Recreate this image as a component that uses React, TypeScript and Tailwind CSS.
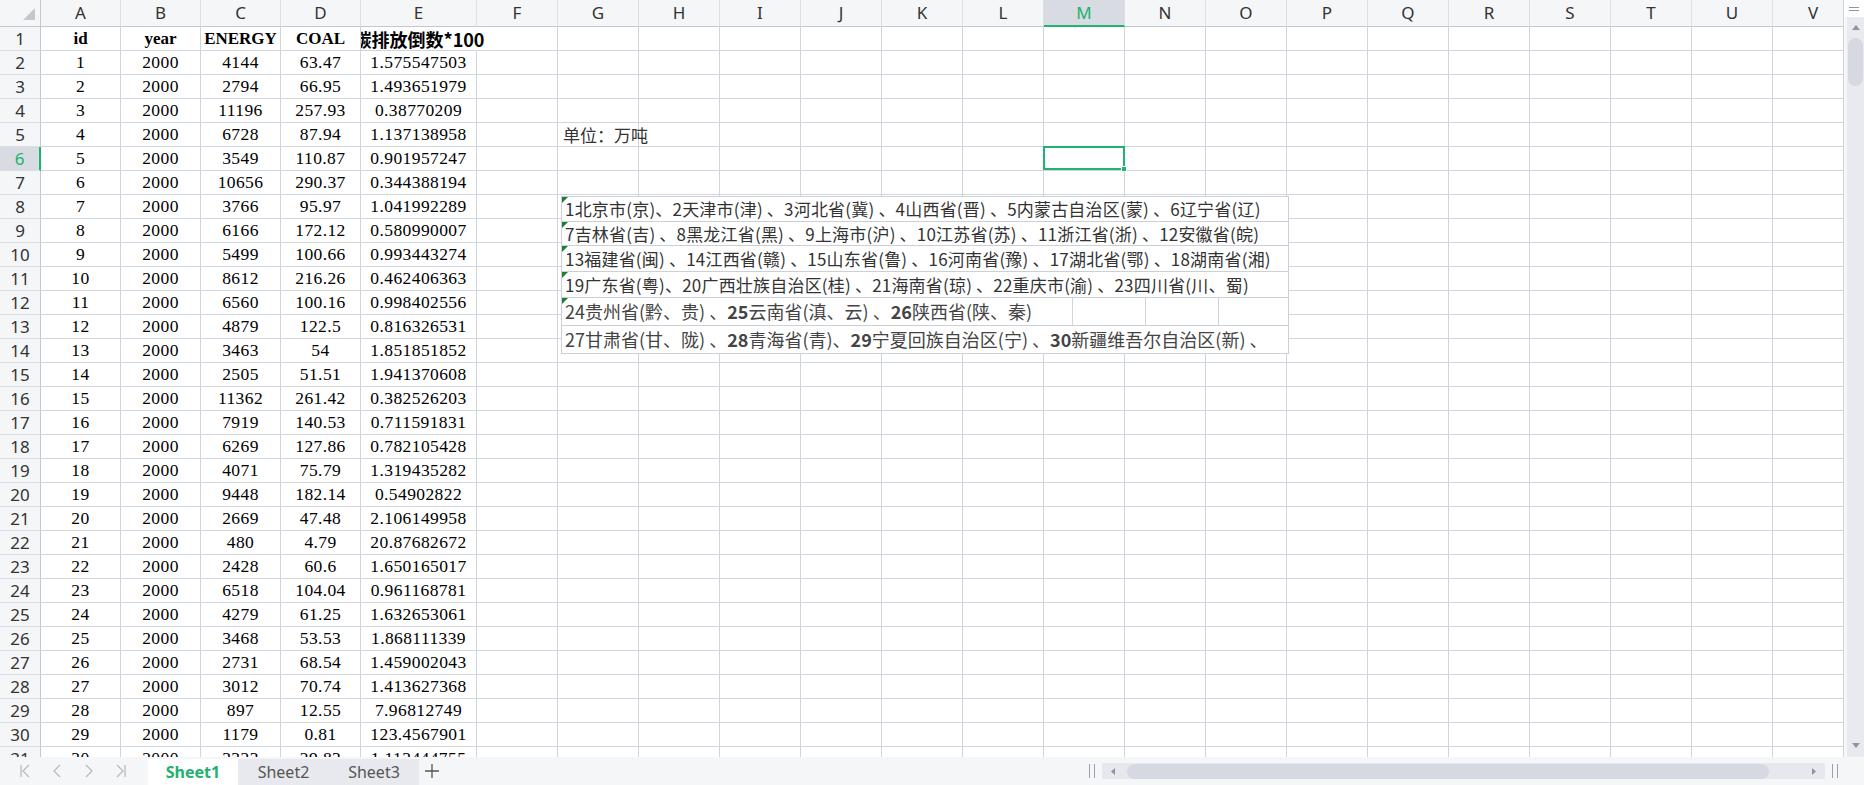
import clsx from 'clsx';

const LETTERS = 'ABCDEFGHIJKLMNOPQRSTUV'.split('');
const SERIF = "[font-family:'Liberation_Serif','Noto_Sans_CJK_SC',serif]";
const CJK = "[font-family:'Noto_Sans_CJK_SC','Noto_Sans',sans-serif]";
const UI = "[font-family:'Noto_Sans','Noto_Sans_CJK_SC',sans-serif]";

const colW = (i: number) => (i < 4 ? 'w-[80px]' : i === 4 ? 'w-[116px]' : 'w-[81px]');

// id, year, ENERGY, COAL, 碳排放倒数*100
const DATA: string[][] = [
  ['1', '2000', '4144', '63.47', '1.575547503'],
  ['2', '2000', '2794', '66.95', '1.493651979'],
  ['3', '2000', '11196', '257.93', '0.38770209'],
  ['4', '2000', '6728', '87.94', '1.137138958'],
  ['5', '2000', '3549', '110.87', '0.901957247'],
  ['6', '2000', '10656', '290.37', '0.344388194'],
  ['7', '2000', '3766', '95.97', '1.041992289'],
  ['8', '2000', '6166', '172.12', '0.580990007'],
  ['9', '2000', '5499', '100.66', '0.993443274'],
  ['10', '2000', '8612', '216.26', '0.462406363'],
  ['11', '2000', '6560', '100.16', '0.998402556'],
  ['12', '2000', '4879', '122.5', '0.816326531'],
  ['13', '2000', '3463', '54', '1.851851852'],
  ['14', '2000', '2505', '51.51', '1.941370608'],
  ['15', '2000', '11362', '261.42', '0.382526203'],
  ['16', '2000', '7919', '140.53', '0.711591831'],
  ['17', '2000', '6269', '127.86', '0.782105428'],
  ['18', '2000', '4071', '75.79', '1.319435282'],
  ['19', '2000', '9448', '182.14', '0.54902822'],
  ['20', '2000', '2669', '47.48', '2.106149958'],
  ['21', '2000', '480', '4.79', '20.87682672'],
  ['22', '2000', '2428', '60.6', '1.650165017'],
  ['23', '2000', '6518', '104.04', '0.961168781'],
  ['24', '2000', '4279', '61.25', '1.632653061'],
  ['25', '2000', '3468', '53.53', '1.868111339'],
  ['26', '2000', '2731', '68.54', '1.459002043'],
  ['27', '2000', '3012', '70.74', '1.413627368'],
  ['28', '2000', '897', '12.55', '7.96812749'],
  ['29', '2000', '1179', '0.81', '123.4567901'],
  ['30', '2000', '3323', '29.83', '1.113444755'],
];

function ColumnHeader() {
  return (
    <div className="flex h-[27px] shrink-0 bg-[#f5f6f8]">
      <div className="relative w-[41px] shrink-0 border-r border-b border-[#c3c7d0]">
        <svg className="absolute left-0 top-0" width="41" height="27" viewBox="0 0 41 27">
          <polygon points="35,8 35,20 23,20" fill="#c3c7d0" />
        </svg>
      </div>
      {LETTERS.map((l, i) => (
        <div
          key={l}
          className={clsx(
            colW(i),
            UI,
            'shrink-0 flex items-center justify-center text-[17px] border-r border-r-[#dcdfe5]',
            l === 'M'
              ? 'bg-[#d8dbe2] text-[#20b26f] border-b-2 border-b-[#20b26f]'
              : 'text-[#333] border-b border-b-[#c3c7d0]'
          )}
        >
          {l}
        </div>
      ))}
    </div>
  );
}

function RowHeader({ n }: { n: number }) {
  const sel = n === 6;
  return (
    <div
      className={clsx(
        UI,
        'w-[41px] shrink-0 flex items-center justify-center text-[17px] border-b border-b-[#dcdfe5]',
        sel
          ? 'bg-[#d8dbe2] text-[#20b26f] border-r-2 border-r-[#20b26f]'
          : 'bg-[#f5f6f8] text-[#333] border-r border-r-[#c3c7d0]'
      )}
    >
      {n}
    </div>
  );
}

function TitleRow() {
  const titles = ['id', 'year', 'ENERGY', 'COAL'];
  return (
    <div className="flex h-[24px] shrink-0">
      <RowHeader n={1} />
      {LETTERS.map((l, i) => (
        <div
          key={l}
          className={clsx(
            colW(i),
            'relative shrink-0 flex items-center justify-center border-b border-[#d0d4dd]',
            i === 4 ? 'border-r border-r-transparent' : 'border-r',
            SERIF,
            'text-[17px] font-bold text-black'
          )}
        >
          {i < 4 && titles[i]}
          {i === 4 && (
            <div className="absolute left-0 top-0 z-10 h-full w-[200px] overflow-hidden">
              <span
                className={clsx(
                  CJK,
                  'absolute left-[58px] top-1/2 -translate-x-1/2 -translate-y-1/2 whitespace-nowrap text-[18px] font-bold text-black'
                )}
              >
                碳排放倒数*100
              </span>
            </div>
          )}
        </div>
      ))}
    </div>
  );
}

function DataRow({ n, vals }: { n: number; vals: string[] }) {
  return (
    <div className="flex h-[24px] shrink-0">
      <RowHeader n={n} />
      {LETTERS.map((l, i) => (
        <div
          key={l}
          className={clsx(
            colW(i),
            'relative shrink-0 flex items-center border-r border-b border-[#d0d4dd] text-black whitespace-nowrap',
            i < 5 ? 'justify-center' : 'justify-start'
          )}
        >
          {i < 5 && <span className={clsx(SERIF, 'text-[17.5px] tracking-[0.4px]')}>{vals[i]}</span>}
          {n === 5 && l === 'G' && (
            <span className={clsx(CJK, 'pl-[5px] text-[17px] text-[#333]')}>单位：万吨</span>
          )}
          {n === 6 && l === 'M' && (
            <div className="absolute -left-[1px] -top-[1px] right-[-1px] bottom-0 z-10 border-2 border-[#20b26f]">
              <div className="absolute -right-[4px] -bottom-[4px] h-[6px] w-[6px] bg-[#20b26f] border border-white" />
            </div>
          )}
        </div>
      ))}
    </div>
  );
}

function Corner() {
  return (
    <div className="absolute left-0 top-0 h-0 w-0 border-t-[6px] border-r-[6px] border-t-[#1f7d3a] border-r-transparent" />
  );
}

function NoteBox() {
  const line = 'relative flex items-center border-x border-b border-[#cad0da] bg-white whitespace-nowrap';
  return (
    <div className="absolute left-[561px] top-[196px] z-20 w-[728px] border-t border-[#cad0da]">
      <div className={clsx(line, 'h-[25px] pl-[3px] text-[17px] tracking-[0.2px] text-[#333]', CJK)}>
        <Corner />
        1北京市(京)、2天津市(津) 、3河北省(冀) 、4山西省(晋) 、5内蒙古自治区(蒙) 、6辽宁省(辽)
      </div>
      <div className={clsx(line, 'h-[24px] pl-[3px] text-[17px] tracking-[0.2px] text-[#333]', CJK)}>
        <Corner />
        7吉林省(吉) 、8黑龙江省(黑) 、9上海市(沪) 、10江苏省(苏) 、11浙江省(浙) 、12安徽省(皖)
      </div>
      <div className={clsx(line, 'h-[26px] pl-[3px] text-[17px] tracking-[0.2px] text-[#333]', CJK)}>
        <Corner />
        13福建省(闽) 、14江西省(赣) 、15山东省(鲁) 、16河南省(豫) 、17湖北省(鄂) 、18湖南省(湘)
      </div>
      <div className={clsx(line, 'h-[26px] pl-[3px] text-[17px] tracking-[0.2px] text-[#333]', CJK)}>
        <Corner />
        19广东省(粤)、20广西壮族自治区(桂) 、21海南省(琼) 、22重庆市(渝) 、23四川省(川、蜀)
      </div>
      <div className={clsx(line, 'h-[28px] text-[18px] text-[#444]', CJK)}>
        <Corner />
        <div className="flex h-full w-[510px] shrink-0 items-center pl-[3px]">
          24贵州省(黔、贵) 、<b className="font-bold">25</b>云南省(滇、云) 、<b className="font-bold">26</b>陕西省(陕、秦)
        </div>
        <div className="h-full w-[73px] shrink-0 border-l border-[#d0d4dd]" />
        <div className="h-full w-[73px] shrink-0 border-l border-[#d0d4dd]" />
        <div className="h-full flex-1 border-l border-[#d0d4dd]" />
      </div>
      <div className={clsx(line, 'h-[28px] pl-[3px] text-[18px] text-[#444]', CJK)}>
        27甘肃省(甘、陇) 、<b className="font-bold">28</b>青海省(青)、<b className="font-bold">29</b>宁夏回族自治区(宁) 、
        <b className="font-bold">30</b>新疆维吾尔自治区(新) 、
      </div>
    </div>
  );
}

function VScroll() {
  return (
    <div className="flex w-[21px] shrink-0 flex-col border-l border-[#d0d4dc] bg-[#f5f6f8]">
      <div className="flex h-[17px] shrink-0 flex-col items-center justify-center gap-[2px] bg-white">
        <div className="h-px w-[10px] bg-[#8c94a6]" />
        <div className="h-px w-[10px] bg-[#8c94a6]" />
      </div>
      <div className="ml-[3px] flex flex-1 flex-col items-center bg-[#e9eaf0]">
        <svg className="mt-[8px]" width="8" height="5" viewBox="0 0 8 5">
          <polygon points="4,0 8,5 0,5" fill="#8c94a6" />
        </svg>
        <div className="mt-[8px] h-[48px] w-[15px] rounded-full bg-[#d6d9e1]" />
        <div className="flex-1" />
        <svg className="mb-[9px]" width="8" height="5" viewBox="0 0 8 5">
          <polygon points="0,0 8,0 4,5" fill="#8c94a6" />
        </svg>
      </div>
    </div>
  );
}

function NavIcon({ d }: { d: string }) {
  return (
    <svg width="12" height="16" viewBox="0 0 12 16" fill="none" stroke="#b5bac5" strokeWidth="1.3">
      <path d={d} />
    </svg>
  );
}

function Splitter() {
  return (
    <div className="flex h-[14px] w-[6px] shrink-0 justify-between">
      <div className="h-full w-px bg-[#9aa0ad]" />
      <div className="h-full w-px bg-[#9aa0ad]" />
    </div>
  );
}

function BottomBar() {
  const tab = 'flex items-center justify-center text-[16px]';
  return (
    <div className={clsx(UI, 'flex h-[28px] shrink-0 items-stretch bg-[#f5f6f8]')}>
      <div className="flex w-[148px] shrink-0 items-center gap-[20px] pl-[19px]">
        <NavIcon d="M2 2V14M10 2L4 8L10 14" />
        <NavIcon d="M9 2L3 8L9 14" />
        <NavIcon d="M3 2L9 8L3 14" />
        <NavIcon d="M2 2L8 8L2 14M10 2V14" />
      </div>
      <div className="mt-[2px] flex">
        <div className={clsx(tab, 'w-[90px] bg-white font-bold text-[#20b26f]')}>Sheet1</div>
        <div className={clsx(tab, 'w-[91px] bg-[#e8e9ee] text-[#555]')}>Sheet2</div>
        <div className={clsx(tab, 'w-[90px] bg-[#e8e9ee] text-[#555]')}>Sheet3</div>
      </div>
      <div className="ml-[5px] flex items-center">
        <svg width="16" height="16" viewBox="0 0 16 16" stroke="#555" strokeWidth="1.3">
          <path d="M8 1V15M1 8H15" />
        </svg>
      </div>
      <div className="flex-1" />
      <div className="flex items-center pr-[26px]">
        <Splitter />
        <div className="ml-[7px] flex h-[16px] w-[723px] items-center bg-[#e6e8ee] px-[9px]">
          <svg width="4" height="7" viewBox="0 0 4 7">
            <polygon points="4,0 4,7 0,3.5" fill="#8c94a6" />
          </svg>
          <div className="ml-[12px] h-[15px] w-[642px] rounded-full bg-[#d6d9e1]" />
          <div className="flex-1" />
          <svg width="4" height="7" viewBox="0 0 4 7">
            <polygon points="0,0 4,3.5 0,7" fill="#8c94a6" />
          </svg>
        </div>
        <div className="ml-[7px]">
          <Splitter />
        </div>
      </div>
    </div>
  );
}

export default function App() {
  return (
    <div className="flex h-[785px] w-[1864px] flex-col overflow-hidden bg-white">
      <div className="flex min-h-0 flex-1">
        <div className="relative flex min-w-0 flex-1 flex-col overflow-hidden">
          <ColumnHeader />
          <TitleRow />
          {DATA.map((vals, i) => (
            <DataRow key={i} n={i + 2} vals={vals} />
          ))}
          <NoteBox />
        </div>
        <VScroll />
      </div>
      <BottomBar />
    </div>
  );
}
